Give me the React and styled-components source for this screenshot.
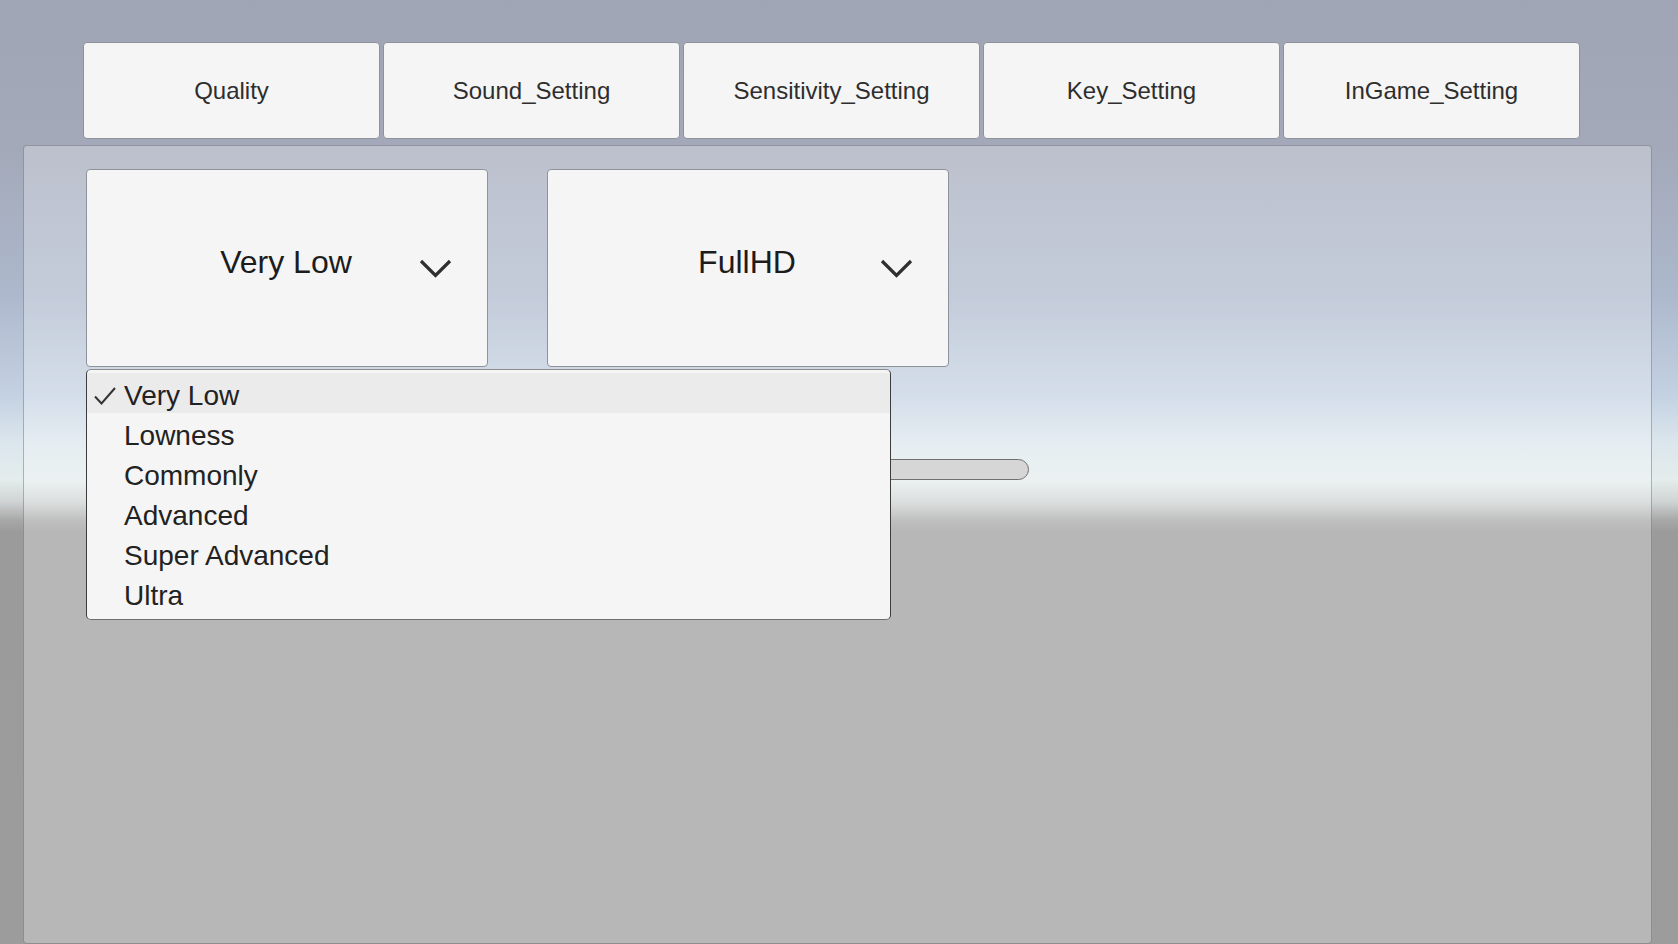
import React from "react";
import styled, { createGlobalStyle } from "styled-components";

const GlobalStyle = createGlobalStyle`
  html, body {
    margin: 0;
    padding: 0;
  }
  body {
    width: 1678px;
    height: 944px;
    overflow: hidden;
    font-family: "Liberation Sans", Arial, sans-serif;
    background: linear-gradient(
      to bottom,
      #9fa5b4 0px,
      #a3a9b9 150px,
      #adb8cc 295px,
      #c4d1e2 395px,
      #dce7ed 445px,
      #e4ecec 480px,
      #cfd3d3 502px,
      #a8a8a8 520px,
      #9c9b9b 532px,
      #9d9c9c 944px
    );
  }
`;

const tabs = [
  "Quality",
  "Sound_Setting",
  "Sensitivity_Setting",
  "Key_Setting",
  "InGame_Setting",
];

const qualityOptions = [
  "Very Low",
  "Lowness",
  "Commonly",
  "Advanced",
  "Super Advanced",
  "Ultra",
];

const Screen = styled.div`
  display: flex;
  flex-direction: column;
  height: 944px;
  padding-top: 42px;
  box-sizing: border-box;
`;

const TabBar = styled.div`
  display: flex;
  gap: 3px;
  width: 1497px;
  height: 97px;
  margin-left: 83px;
`;

const Tab = styled.button`
  flex: 1;
  display: flex;
  align-items: center;
  justify-content: center;
  background: #f5f5f5;
  border: 1px solid #8e929b;
  border-radius: 4px;
  font-family: inherit;
  font-size: 24px;
  color: #2e2e2e;
  padding: 0;
`;

const Panel = styled.div`
  flex: 1;
  width: 1629px;
  margin: 6px 0 0 23px;
  padding: 23px 0 0 62px;
  box-sizing: border-box;
  background: rgba(255, 255, 255, 0.28);
  border: 1px solid rgba(80, 80, 90, 0.4);
  border-radius: 4px;
`;

const DropdownRow = styled.div`
  display: flex;
  gap: 59px;
`;

const DropdownWrap = styled.div`
  position: relative;
`;

const Header = styled.div`
  display: grid;
  grid-template-columns: 1fr auto 1fr;
  align-items: center;
  width: 402px;
  height: 198px;
  box-sizing: border-box;
  background: #f5f5f5;
  border: 1px solid #8e929b;
  border-radius: 4px;
`;

const Label = styled.span`
  grid-column: 2;
  font-size: 32px;
  color: #1c1c1c;
  margin: 0 2px 12px 0;
  white-space: nowrap;
`;

const Arrow = styled.svg`
  grid-column: 3;
  justify-self: end;
  margin-right: 35px;
  filter: blur(0.3px);
`;

const List = styled.div`
  position: absolute;
  top: calc(100% + 2px);
  left: 0;
  z-index: 2;
  width: 805px;
  height: 251px;
  box-sizing: border-box;
  padding-top: 3px;
  background: #f5f5f5;
  border: 1px solid;
  border-color: #8c8c8c #3c3c3c #6e6e6e #3c3c3c;
  border-radius: 5px;
`;

const Item = styled.div`
  display: flex;
  align-items: center;
  height: 40px;
  box-sizing: border-box;
  padding: 5px 0 0 7px;
  background: ${(p) => (p.$selected ? "#ebebeb" : "transparent")};
  font-size: 28px;
  line-height: 35px;
  color: #222;
`;

const CheckSlot = styled.span`
  display: flex;
  width: 22px;
  margin-right: 8px;
`;

const Slider = styled.div`
  width: 943px;
  height: 21px;
  margin-top: 92px;
  box-sizing: border-box;
  background: #d6d6d6;
  border: 1px solid #707070;
  border-radius: 11px;
`;

const Chevron = () => (
  <Arrow width="33" height="19" viewBox="0 0 33 19">
    <polyline
      points="2,2 16.5,16.5 31,2"
      fill="none"
      stroke="#2f2f2f"
      strokeWidth="3.2"
    />
  </Arrow>
);

const Check = () => (
  <svg width="22" height="18" viewBox="0 0 22 18">
    <polyline
      points="1,9.5 7.5,16.5 21,1"
      fill="none"
      stroke="#333"
      strokeWidth="2"
    />
  </svg>
);

const Dropdown = ({ value, options }) => (
  <DropdownWrap>
    <Header>
      <Label>{value}</Label>
      <Chevron />
    </Header>
    {options && (
      <List>
        {options.map((opt) => (
          <Item key={opt} $selected={opt === value}>
            <CheckSlot>{opt === value && <Check />}</CheckSlot>
            {opt}
          </Item>
        ))}
      </List>
    )}
  </DropdownWrap>
);

const App = () => {
  return (
    <Screen>
      <GlobalStyle />
      <TabBar>
        {tabs.map((t) => (
          <Tab key={t}>{t}</Tab>
        ))}
      </TabBar>
      <Panel>
        <DropdownRow>
          <Dropdown value="Very Low" options={qualityOptions} />
          <Dropdown value="FullHD" />
        </DropdownRow>
        <Slider />
      </Panel>
    </Screen>
  );
};

export default App;
